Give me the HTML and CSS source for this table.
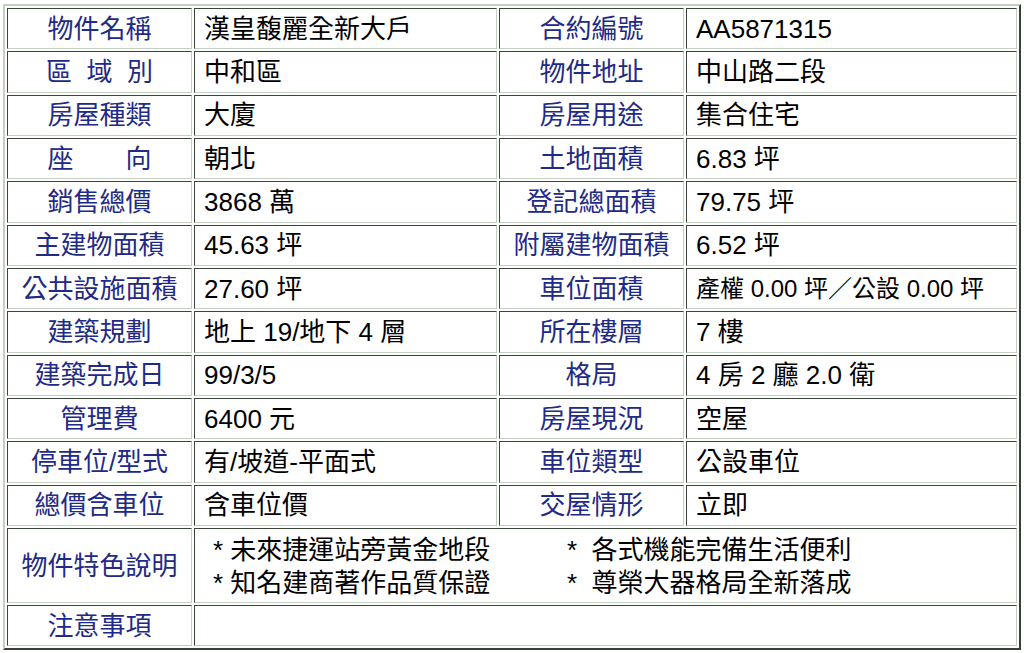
FILE: index.html
```html
<!DOCTYPE html>
<html lang="zh-Hant">
<head>
<meta charset="utf-8">
<title>物件資料</title>
<link rel="stylesheet" href="styles.css">
</head>
<body>
<table class="info">
  <colgroup>
    <col class="c-label1"><col class="c-value1"><col class="c-label2"><col class="c-value2">
  </colgroup>
  <tbody>
    <tr><td class="lbl">物件名稱</td><td class="val">漢皇馥麗全新大戶</td><td class="lbl">合約編號</td><td class="val">AA5871315</td></tr>
    <tr><td class="lbl">區&nbsp;&nbsp;域&nbsp;&nbsp;別</td><td class="val">中和區</td><td class="lbl">物件地址</td><td class="val">中山路二段</td></tr>
    <tr><td class="lbl">房屋種類</td><td class="val">大廈</td><td class="lbl">房屋用途</td><td class="val">集合住宅</td></tr>
    <tr><td class="lbl">座　　向</td><td class="val">朝北</td><td class="lbl">土地面積</td><td class="val">6.83 坪</td></tr>
    <tr><td class="lbl">銷售總價</td><td class="val">3868 萬</td><td class="lbl">登記總面積</td><td class="val">79.75 坪</td></tr>
    <tr><td class="lbl">主建物面積</td><td class="val">45.63 坪</td><td class="lbl">附屬建物面積</td><td class="val">6.52 坪</td></tr>
    <tr><td class="lbl">公共設施面積</td><td class="val">27.60 坪</td><td class="lbl">車位面積</td><td class="val val-sm">產權 0.00 坪／公設 0.00 坪</td></tr>
    <tr><td class="lbl">建築規劃</td><td class="val">地上 19/地下 4 層</td><td class="lbl">所在樓層</td><td class="val">7 樓</td></tr>
    <tr><td class="lbl">建築完成日</td><td class="val">99/3/5</td><td class="lbl">格局</td><td class="val">4 房 2 廳 2.0 衛</td></tr>
    <tr><td class="lbl">管理費</td><td class="val">6400 元</td><td class="lbl">房屋現況</td><td class="val">空屋</td></tr>
    <tr><td class="lbl">停車位/型式</td><td class="val">有/坡道-平面式</td><td class="lbl">車位類型</td><td class="val">公設車位</td></tr>
    <tr><td class="lbl">總價含車位</td><td class="val">含車位價</td><td class="lbl">交屋情形</td><td class="val">立即</td></tr>
    <tr class="feature-row">
      <td class="lbl">物件特色說明</td>
      <td class="val features" colspan="3">
        <div class="feature-grid">
          <span>* 未來捷運站旁黃金地段</span><span>*&nbsp;&nbsp;各式機能完備生活便利</span>
          <span>* 知名建商著作品質保證</span><span>*&nbsp;&nbsp;尊榮大器格局全新落成</span>
        </div>
      </td>
    </tr>
    <tr><td class="lbl">注意事項</td><td class="val" colspan="3"></td></tr>
  </tbody>
</table>
</body>
</html>
```

FILE: styles.css
```css
html, body {
  margin: 0;
  padding: 0;
  background: #ffffff;
}

body {
  font-family: "Liberation Sans", "Noto Sans CJK TC", sans-serif;
  font-size: 26px;
  color: #000000;
}

.info {
  margin: 4px 0 0 3px;
  width: 1018px;
  table-layout: fixed;
  border-collapse: separate;
  border-spacing: 2px;
  border-style: solid;
  border-width: 2px;
  border-color: #c2d0c2 #364236 #364236 #c2d0c2;
}

.c-label1 { width: 185px; }
.c-value1 { width: 303px; }
.c-label2 { width: 185px; }
.c-value2 { width: 331px; }

.info td {
  box-sizing: border-box;
  height: 41.35px;
  padding: 0;
  border-style: solid;
  border-width: 1px;
  border-color: #3a463a #c2d0c2 #c2d0c2 #3a463a;
  line-height: 30px;
  white-space: nowrap;
  vertical-align: middle;
}

.lbl {
  color: #212a86;
  text-align: center;
}

.val {
  text-align: left;
  padding-left: 9px !important;
}

.val-sm {
  font-size: 24px;
}

.feature-row td {
  height: 75px;
}

.info td.features {
  padding-left: 18px !important;
}

.feature-grid {
  display: grid;
  grid-template-columns: 354px auto;
  line-height: 33px;
  padding-top: 2px;
}
```
